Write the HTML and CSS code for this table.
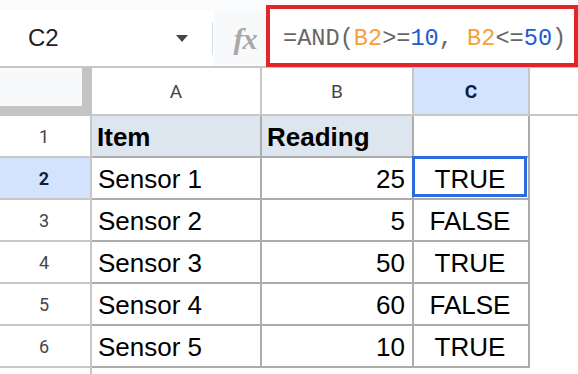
FILE: index.html
```html
<!DOCTYPE html>
<html>
<head>
<meta charset="utf-8">
<link rel="stylesheet" href="styles.css">
</head>
<body>
<div class="page">
  <div class="strip"></div>
  <div class="toolbar">
    <div class="namebox">
      <span class="cellref">C2</span>
      <span class="caret"></span>
    </div>
    <div class="divider"></div>
    <div class="fxbox"><span class="fx">fx</span></div>
    <div class="formula">
      <span class="f-g">=AND(</span><span class="f-o">B2</span><span class="f-g">&gt;=</span><span class="f-b">10</span><span class="f-g">, </span><span class="f-o">B2</span><span class="f-g">&lt;=</span><span class="f-b">50</span><span class="f-g">)</span>
      <div class="highlight"></div>
    </div>
  </div>
  <div class="sheet">
    <div class="corner"><div class="corner-fill"></div></div>
    <div class="colhdr">A</div>
    <div class="colhdr">B</div>
    <div class="colhdr sel">C</div>
    <div class="colhdr last"></div>

    <div class="rowhdr">1</div>
    <div class="cell head">Item</div>
    <div class="cell head">Reading</div>
    <div class="cell"></div>
    <div class="blank"></div>

    <div class="rowhdr sel">2</div>
    <div class="cell">Sensor 1</div>
    <div class="cell num">25</div>
    <div class="cell bool active">TRUE</div>
    <div class="blank"></div>

    <div class="rowhdr">3</div>
    <div class="cell">Sensor 2</div>
    <div class="cell num">5</div>
    <div class="cell bool">FALSE</div>
    <div class="blank"></div>

    <div class="rowhdr">4</div>
    <div class="cell">Sensor 3</div>
    <div class="cell num">50</div>
    <div class="cell bool">TRUE</div>
    <div class="blank"></div>

    <div class="rowhdr">5</div>
    <div class="cell">Sensor 4</div>
    <div class="cell num">60</div>
    <div class="cell bool">FALSE</div>
    <div class="blank"></div>

    <div class="rowhdr">6</div>
    <div class="cell">Sensor 5</div>
    <div class="cell num">10</div>
    <div class="cell bool">TRUE</div>
    <div class="blank"></div>

    <div class="rowhdr tail"></div>
  </div>
</div>
</body>
</html>
```

FILE: styles.css
```css
* { box-sizing: border-box; }
html, body { margin: 0; padding: 0; background: #ffffff; }
body { font-family: "Liberation Sans", Arial, sans-serif; overflow: hidden; }

.page {
  width: 578px;
  height: 374px;
  display: flex;
  flex-direction: column;
}

.strip { height: 10px; background: #f9fbfd; flex: none; }

.toolbar {
  height: 56px;
  flex: none;
  display: flex;
  align-items: stretch;
}

.namebox {
  width: 212px;
  background: #ffffff;
  display: flex;
  align-items: center;
  padding-left: 28px;
  padding-right: 24px;
}
.cellref {
  font-family: "Liberation Sans", Arial, sans-serif;
  font-size: 24px;
  color: #1f1f1f;
  flex: 1;
}
.caret {
  width: 0; height: 0;
  border-left: 6px solid transparent;
  border-right: 6px solid transparent;
  border-top: 7px solid #444746;
  margin-top: 1px;
}

.divider {
  width: 2px;
  background: #ffffff;
  display: flex;
  align-items: center;
}
.divider::before {
  content: "";
  display: block;
  width: 1px;
  height: 33px;
  background: #d5dde6;
}

.fxbox {
  width: 52px;
  background: #f8f9fa;
  display: flex;
  align-items: center;
  justify-content: center;
  padding-left: 10px;
}
.fx {
  font-family: "Liberation Serif", "Times New Roman", serif;
  font-style: italic;
  font-weight: bold;
  font-size: 30px;
  color: #a9a9a9;
  letter-spacing: -1px;
  line-height: 1;
  margin-top: 2px;
}

.formula {
  flex: 1;
  position: relative;
  background: #ffffff;
  display: flex;
  align-items: center;
  padding-left: 17px;
  font-family: "Liberation Mono", "Courier New", monospace;
  font-size: 23.6px;
  white-space: pre;
}
.f-g { color: #666666; }
.f-o { color: #f5a03a; }
.f-b { color: #1c5bd2; }
.highlight {
  position: absolute;
  top: -5px;
  bottom: -1px;
  left: 0;
  right: 0;
  border: 4px solid #e0262a;
}

.sheet {
  flex: 1;
  border-top: 2px solid #c7c7c7;
  display: grid;
  grid-template-columns: 92px 170px 152px 116px 1fr;
  grid-template-rows: 48px repeat(6, 42px) 1fr;
}

.corner {
  background: #c4c4c4;
}
.corner-fill {
  width: 82px;
  height: 38px;
  background: #f8f9fa;
}

.colhdr {
  border-right: 2px solid #c7c7c7;
  border-bottom: 2px solid #c7c7c7;
  display: flex;
  align-items: center;
  justify-content: center;
  font-family: Roboto, "Liberation Sans", sans-serif;
  font-size: 19px;
  color: #444746;
}
.colhdr.sel {
  background: #d3e3fd;
  color: #0b1d45;
  font-weight: bold;
}
.colhdr.last { border-right: none; }

.rowhdr {
  border-right: 2px solid #c7c7c7;
  border-bottom: 2px solid #c7c7c7;
  display: flex;
  align-items: center;
  justify-content: center;
  font-family: Roboto, "Liberation Sans", sans-serif;
  font-size: 18px;
  color: #444746;
  padding-right: 2px;
}
.rowhdr.sel {
  background: #d3e3fd;
  color: #0b1d45;
  font-weight: bold;
}
.rowhdr.tail { border-bottom: none; }

.cell {
  border-right: 2px solid #acacac;
  border-bottom: 2px solid #acacac;
  font-family: "Liberation Sans", Arial, sans-serif;
  font-size: 26px;
  color: #000000;
  line-height: 40px;
  padding: 1px 6px 0 6px;
  white-space: nowrap;
}
.cell.head {
  background: #dde5ee;
  font-weight: bold;
  padding-left: 5px;
}
.cell.num { text-align: right; padding-right: 7px; }
.cell.bool { text-align: center; padding-right: 8px; }
.cell.active { position: relative; }
.cell.active::after {
  content: "";
  position: absolute;
  top: -2px;
  left: -2px;
  right: 1px;
  bottom: 1px;
  border: 3px solid #2b6de0;
}

.blank { background: #ffffff; }
```
